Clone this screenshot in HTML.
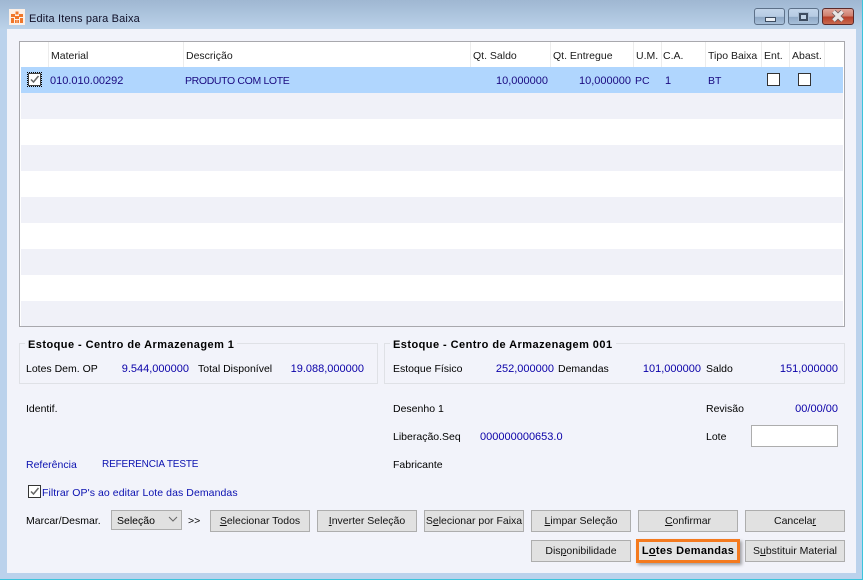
<!DOCTYPE html>
<html><head><meta charset="utf-8"><style>
html,body{margin:0;padding:0}
body{width:863px;height:580px;overflow:hidden;position:relative;font:10.5px "Liberation Sans",sans-serif;color:#000;background:#bbd2ec}
div,span.t,svg{position:absolute}
.t{position:absolute;white-space:nowrap;line-height:14px;height:14px;margin-top:1px}
.r{text-align:right}
.n{font-size:11px}
.b{color:#0a00a8}
.p{color:#1a0a80}
.h{color:#1a1a1a}
.btn{background:#e1e1e1;border:1px solid #adadad;box-sizing:border-box;height:22px;text-align:center;line-height:21px;white-space:nowrap;color:#111}
.sep{width:1px;height:25px;top:42px;background:#ececec}
.cb{width:13px;height:13px;box-sizing:border-box;border:1px solid #333;background:#fff}
.row{left:21px;width:822px;height:26px}
.grp{border:1px solid #dfe1e6;box-sizing:border-box;height:41px;top:343px}
.gt{font-size:11px;font-weight:bold;background:#f2f3fa;padding:0 3px;letter-spacing:.45px;color:#000}
</style></head><body>
<div style="left:0;top:0;width:863px;height:30px;background:linear-gradient(#9fb7d2,#bcd3ea)"></div>
<div style="left:0;top:579px;width:863px;height:1px;background:#3cc4dc"></div>
<div style="left:862px;top:0;width:1px;height:580px;background:#3cc4dc"></div>
<div style="left:7px;top:29px;width:849px;height:544px;background:#f2f3fa"></div>

<svg style="left:9px;top:9px" width="16" height="16" viewBox="0 0 16 16"><rect width="16" height="16" fill="#fdf0e6"/><path d="M2 5h4v3H2zM6.500 2.500h3v3h-3zM10 5h4v3h-4zM2 9h3v5H2zM6 7h4v3H6zM11 9h3v5h-3zM6 11h1.700v3H6zM8.300 11H10v3H8.300z" fill="#f0762a"/></svg>
<span class="t h" style="left:29px;top:11px;font-size:11px;letter-spacing:.15px;color:#101028">Edita Itens para Baixa</span>

<div style="left:754px;top:8px;width:31px;height:17px;box-sizing:border-box;border:1px solid #5d7189;border-radius:3px;background:linear-gradient(#c3d5ea 0,#b6cbe3 50%,#8fa9c6 55%,#a8c0da)"></div>
<div style="left:765px;top:17px;width:11px;height:5px;box-sizing:border-box;background:#e8eef5;border:1px solid #3d4c60"></div>
<div style="left:788px;top:8px;width:31px;height:17px;box-sizing:border-box;border:1px solid #5d7189;border-radius:3px;background:linear-gradient(#c3d5ea 0,#b6cbe3 50%,#8fa9c6 55%,#a8c0da)"></div>
<div style="left:798px;top:12px;width:11px;height:10px;box-sizing:border-box;background:#3d4c60;border:1px solid #a8bdd4"></div>
<div style="left:801px;top:15px;width:5px;height:4px;background:#c0d2e6"></div>
<div style="left:822px;top:8px;width:32px;height:17px;box-sizing:border-box;border:1px solid #5b2a2a;border-radius:3px;background:linear-gradient(#dfa79b 0,#d0806f 45%,#b8402a 55%,#c86a50)"></div>
<svg style="left:831px;top:10px" width="14" height="12" viewBox="0 0 14 12"><path d="M2.500 1.500L11.500 10.500M11.500 1.500L2.500 10.500" stroke="#6b5a5a" stroke-width="5"/><path d="M2.500 1.500L11.500 10.500M11.500 1.500L2.500 10.500" stroke="#e9e6e4" stroke-width="3.500"/></svg>

<div style="left:19px;top:41px;width:826px;height:286px;box-sizing:border-box;background:#fff;border:1px solid #a8a8ad"></div>
<div class="sep" style="left:48px"></div><div class="sep" style="left:183px"></div><div class="sep" style="left:470px"></div><div class="sep" style="left:550px"></div><div class="sep" style="left:633px"></div><div class="sep" style="left:661px"></div><div class="sep" style="left:705px"></div><div class="sep" style="left:761px"></div><div class="sep" style="left:789px"></div><div class="sep" style="left:824px"></div>
<span class="t h" style="left:51px;top:48px">Material</span>
<span class="t h" style="left:186px;top:48px">Descrição</span>
<span class="t h" style="left:473px;top:48px">Qt. Saldo</span>
<span class="t h" style="left:553px;top:48px">Qt. Entregue</span>
<span class="t h" style="left:636px;top:48px">U.M.</span>
<span class="t h" style="left:663px;top:48px">C.A.</span>
<span class="t h" style="left:708px;top:48px">Tipo Baixa</span>
<span class="t h" style="left:764px;top:48px">Ent.</span>
<span class="t h" style="left:792px;top:48px">Abast.</span>

<div class="row" style="top:67px;background:#b0d6fe"></div>
<div class="row" style="top:93px;background:#f0f1f8"></div>
<div class="row" style="top:145px;background:#f0f1f8"></div>
<div class="row" style="top:197px;background:#f0f1f8"></div>
<div class="row" style="top:249px;background:#f0f1f8"></div>
<div class="row" style="top:301px;background:#f0f1f8;height:25px"></div>

<div style="left:27px;top:72px;width:15px;height:15px;box-sizing:border-box;border:1px dotted #000"></div>
<div class="cb" style="left:28px;top:73px;border-color:#444"></div>
<svg style="left:28px;top:73px" width="13" height="13" viewBox="0 0 13 13"><path d="M3 6.500L5.500 9L10.500 3" fill="none" stroke="#666" stroke-width="1.500"/></svg>
<span class="t p n" style="left:50px;top:73px">010.010.00292</span>
<span class="t p" style="left:185px;top:73px;letter-spacing:-.35px">PRODUTO COM LOTE</span>
<span class="t p r n" style="left:470px;width:78px;top:73px">10,000000</span>
<span class="t p r n" style="left:553px;width:78px;top:73px">10,000000</span>
<span class="t p" style="left:635px;top:73px">PC</span>
<span class="t p n" style="left:665px;top:73px">1</span>
<span class="t p" style="left:708px;top:73px">BT</span>
<div class="cb" style="left:767px;top:73px"></div>
<div class="cb" style="left:798px;top:73px"></div>

<div class="grp" style="left:19px;width:359px"></div>
<span class="t gt" style="left:25px;top:337px">Estoque - Centro de Armazenagem 1</span>
<span class="t" style="left:26px;top:361px">Lotes Dem. OP</span>
<span class="t b r n" style="left:100px;width:89px;top:361px">9.544,000000</span>
<span class="t" style="left:198px;top:361px">Total Disponível</span>
<span class="t b r n" style="left:280px;width:84px;top:361px">19.088,000000</span>

<div class="grp" style="left:384px;width:461px"></div>
<span class="t gt" style="left:390px;top:337px">Estoque - Centro de Armazenagem 001</span>
<span class="t" style="left:393px;top:361px">Estoque Físico</span>
<span class="t b r n" style="left:480px;width:74px;top:361px">252,000000</span>
<span class="t" style="left:558px;top:361px">Demandas</span>
<span class="t b r n" style="left:630px;width:71px;top:361px">101,000000</span>
<span class="t" style="left:706px;top:361px">Saldo</span>
<span class="t b r n" style="left:760px;width:78px;top:361px">151,000000</span>

<span class="t" style="left:26px;top:401px">Identif.</span>
<span class="t" style="left:393px;top:401px">Desenho 1</span>
<span class="t" style="left:706px;top:401px">Revisão</span>
<span class="t b r n" style="left:770px;width:68px;top:401px">00/00/00</span>
<span class="t" style="left:393px;top:429px">Liberação.Seq</span>
<span class="t b n" style="left:480px;top:429px">000000000653.0</span>
<span class="t" style="left:706px;top:429px">Lote</span>
<div style="left:751px;top:425px;width:87px;height:22px;box-sizing:border-box;background:#fff;border:1px solid #adadad"></div>
<span class="t" style="left:26px;top:457px;color:#0a10b0">Referência</span>
<span class="t" style="left:102px;top:457px;color:#0a10b0;font-size:10px;letter-spacing:-.15px">REFERENCIA TESTE</span>
<span class="t" style="left:393px;top:457px">Fabricante</span>

<div class="cb" style="left:28px;top:485px;background:#fff"></div>
<svg style="left:28px;top:485px" width="13" height="13" viewBox="0 0 13 13"><path d="M3 6.500L5.500 9L10.500 3" fill="none" stroke="#666" stroke-width="1.500"/></svg>
<span class="t" style="left:42px;top:485px;color:#0a10b0;letter-spacing:.07px">Filtrar OP's ao editar Lote das Demandas</span>

<span class="t" style="left:26px;top:513px">Marcar/Desmar.</span>
<div style="left:111px;top:510px;width:71px;height:20px;box-sizing:border-box;background:#e1e1e1;border:1px solid #adadad"></div>
<span class="t" style="left:117px;top:513px">Seleção</span>
<svg style="left:168px;top:516px" width="10" height="7" viewBox="0 0 10 7"><path d="M1 1L5 5L9 1" fill="none" stroke="#666"/></svg>
<span class="t" style="left:188px;top:513px">&gt;&gt;</span>

<div class="btn" style="left:210px;top:510px;width:100px"><u>S</u>elecionar Todos</div>
<div class="btn" style="left:317px;top:510px;width:100px"><u>I</u>nverter Seleção</div>
<div class="btn" style="left:424px;top:510px;width:100px">S<u>e</u>lecionar por Faixa</div>
<div class="btn" style="left:531px;top:510px;width:100px"><u>L</u>impar Seleção</div>
<div class="btn" style="left:638px;top:510px;width:100px"><u>C</u>onfirmar</div>
<div class="btn" style="left:745px;top:510px;width:100px">Cancela<u>r</u></div>
<div class="btn" style="left:531px;top:540px;width:100px">Dis<u>p</u>onibilidade</div>
<div class="btn" style="left:636px;top:539px;width:104px;height:24px;border:3px solid #f47a1f;background:#e4e4e4;line-height:19px;font-size:11px;font-weight:bold;letter-spacing:.3px;box-shadow:2px 2px 3px rgba(0,0,0,.35);color:#000">L<u>o</u>tes Demandas</div>
<div class="btn" style="left:745px;top:540px;width:100px">S<u>u</u>bstituir Material</div>
</body></html>
